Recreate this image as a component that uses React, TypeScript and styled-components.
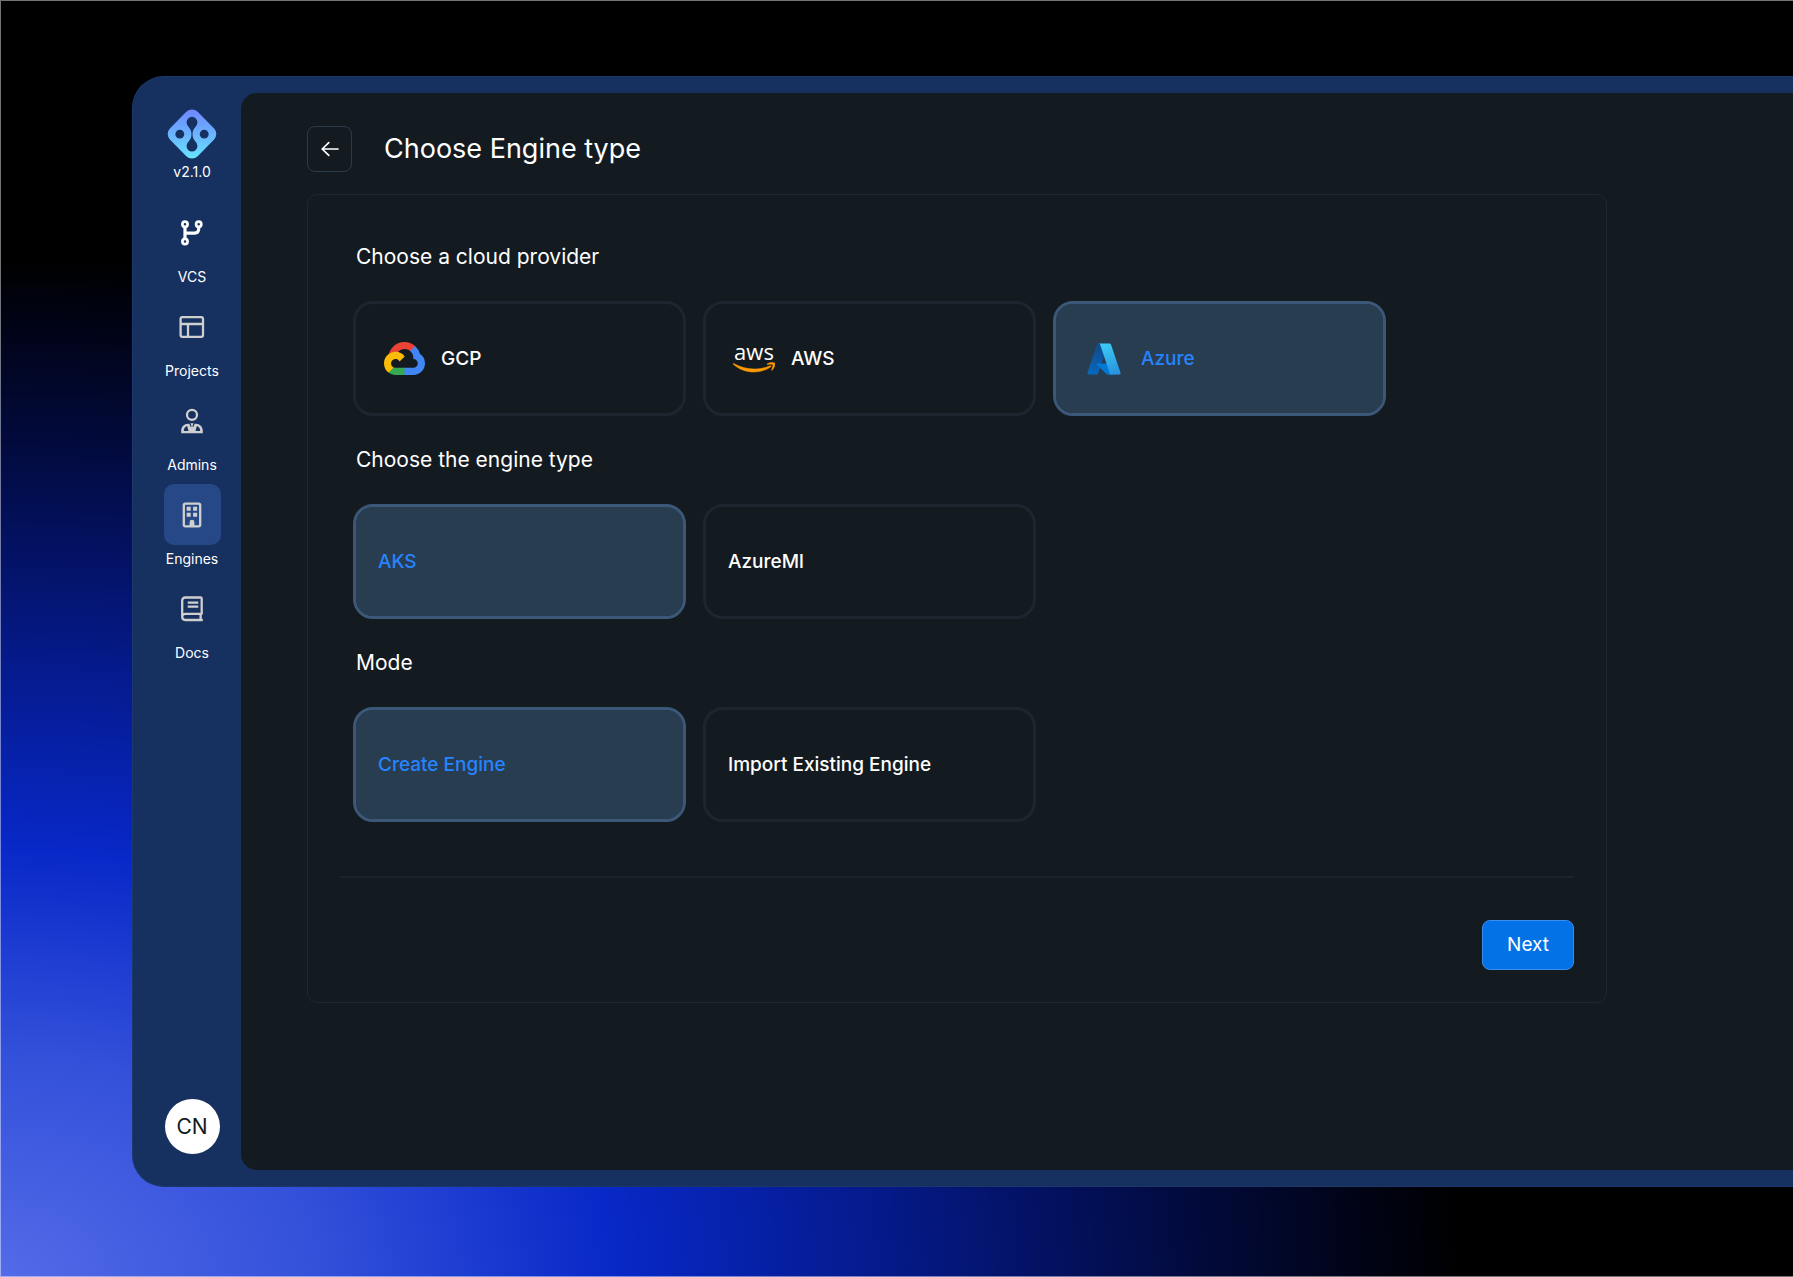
import React, { useState } from 'react';
import styled, { createGlobalStyle } from 'styled-components';

const GlobalStyle = createGlobalStyle`
  *, *::before, *::after { box-sizing: border-box; }
  body { margin: 0; background: #000; }
  body, button, input { font-family: Inter, "Liberation Sans", sans-serif; }
`;

const Page = styled.div`
  min-height: 100vh;
  display: flex;
  padding: 75px 0 89px 131px;
  border: 1px solid rgba(255, 255, 255, 0.45);
  border-right: 0;
  background: radial-gradient(
    ellipse 1460px 1020px at 0% 100%,
    #536bE8 0%,
    #3350da 22%,
    #0828c8 42%,
    #051a8c 60%,
    #020a3c 82%,
    #000 100%
  );
  background-origin: border-box;
`;

const AppWindow = styled.div`
  flex: 1;
  min-width: 0;
  display: flex;
  padding: 16px 0;
  border: 1px solid #1c3769;
  border-right: 0;
  border-radius: 32px 0 0 32px;
  background: #16305f;
`;

const Sidebar = styled.aside`
  flex: none;
  width: 108px;
  display: flex;
  flex-direction: column;
  align-items: center;
  padding: 16px 0 16px 10px;
  color: #fff;
`;

const Version = styled.span`
  margin-top: 4px;
  font-size: 14px;
  line-height: 18px;
`;

const Nav = styled.nav`
  display: flex;
  flex-direction: column;
  gap: 11px;
  margin-top: 21px;
`;

const NavLink = styled.a`
  display: flex;
  flex-direction: column;
  align-items: center;
  gap: 6px;
  color: #fff;
  font-size: 14px;
  line-height: 16px;
  text-decoration: none;
`;

const NavIcon = styled.span<{ $active?: boolean; $bright?: boolean }>`
  width: 57px;
  height: 61px;
  display: grid;
  place-items: center;
  border-radius: 10px;
  color: ${(p) => (p.$bright ? '#fff' : '#cfcfcf')};
  background: ${(p) => (p.$active ? '#274887' : 'transparent')};
`;

const Avatar = styled.button`
  width: 55px;
  height: 55px;
  margin-top: auto;
  padding: 0;
  border: 0;
  border-radius: 50%;
  background: #fff;
  color: #131a20;
  font-size: 21px;
  cursor: pointer;
`;

const Main = styled.main`
  flex: 1;
  min-width: 0;
  padding: 33px 66px;
  border-radius: 16px 0 0 16px;
  background: #141b20;
  color: #fff;
`;

const Header = styled.header`
  display: flex;
  align-items: center;
  gap: 32px;
  margin-bottom: 22px;
`;

const BackButton = styled.button`
  width: 45px;
  height: 46px;
  display: grid;
  place-items: center;
  padding: 0;
  border: 1px solid #2b3b4c;
  border-radius: 8px;
  background: transparent;
  color: #fff;
  cursor: pointer;
`;

const Title = styled.h1`
  margin: 0;
  font-size: 27px;
  font-weight: 400;
  line-height: 34px;
`;

const Card = styled.form`
  max-width: 1300px;
  padding: 50px 32px 32px;
  border: 1px solid #1e2730;
  border-radius: 10px;
`;

const Group = styled.fieldset`
  min-width: 0;
  margin: 0 13px 32px;
  padding: 0;
  border: 0;
`;

const GroupTitle = styled.legend`
  margin-bottom: 32px;
  padding: 0 3px;
  font-size: 21px;
  font-weight: 400;
  line-height: 24px;
`;

const Options = styled.div`
  display: flex;
  flex-wrap: wrap;
  gap: 17px;
`;

const Option = styled.label<{ $selected: boolean; $logo: boolean }>`
  position: relative;
  width: 333px;
  height: 115px;
  display: flex;
  align-items: center;
  gap: 16px;
  padding: 0 ${(p) => (p.$logo ? 27 : 22)}px;
  border: 3px solid ${(p) => (p.$selected ? '#3b5879' : '#1d252e')};
  border-radius: 20px;
  background: ${(p) => (p.$selected ? '#293d51' : 'transparent')};
  background-clip: padding-box;
  color: ${(p) => (p.$selected ? '#2684ff' : '#fff')};
  font-size: 19px;
  font-weight: 500;
  line-height: 24px;
  cursor: pointer;
`;

const Radio = styled.input`
  position: absolute;
  inset: 0;
  margin: 0;
  opacity: 0;
  cursor: pointer;
`;

const LogoSlot = styled.span`
  width: 42px;
  display: grid;
  place-items: center;
`;

const Footer = styled.footer`
  display: flex;
  justify-content: flex-end;
  margin-top: 54px;
  padding-top: 42px;
  border-top: 2px solid #1b232b;
`;

const NextButton = styled.button`
  height: 50px;
  padding: 0 24px;
  border: 1px solid #3a8fee;
  border-radius: 8px;
  background: #0472e7;
  color: #fff;
  font-size: 19px;
  line-height: 24px;
  cursor: pointer;
`;

const BrandMark = () => (
  <svg width="50" height="50" viewBox="0 0 50 50" aria-hidden="true">
    <defs>
      <linearGradient id="brand" x1="0" y1="0" x2="0" y2="50" gradientUnits="userSpaceOnUse">
        <stop offset="0" stopColor="#6f86ff" />
        <stop offset="0.5" stopColor="#6bb2ff" />
        <stop offset="1" stopColor="#66e6ff" />
      </linearGradient>
      <mask id="brandHoles">
        <rect width="50" height="50" fill="#fff" />
        <circle cx="12.8" cy="25.2" r="4.4" />
        <circle cx="37.2" cy="25.2" r="4.4" />
        <path d="M25 7.8a5.4 5.4 0 0 1 5.4 5.4c0 2.2-1 3.6-2.4 5.2-1.6 1.9-2.5 4-2.5 6.8s.9 4.900 2.500 6.800c1.400 1.600 2.400 3 2.400 5.200a5.400 5.400 0 0 1-10.800 0c0-2.200 1-3.600 2.400-5.200 1.600-1.900 2.500-4 2.500-6.800s-.9-4.900-2.500-6.800c-1.400-1.600-2.400-3-2.400-5.200A5.400 5.400 0 0 1 25 7.800z" />
      </mask>
    </defs>
    <g mask="url(#brandHoles)">
      <path
        d="M19.300 2.800a8 8 0 0 1 11.400 0L46.900 19.200a8.200 8.200 0 0 1 0 11.600L30.700 47.200a8 8 0 0 1-11.400 0L3.100 30.800a8.200 8.200 0 0 1 0-11.600z"
        fill="url(#brand)"
      />
    </g>
  </svg>
);

const IconBase = ({ children, strokeWidth = 2.3 }: { children: React.ReactNode; strokeWidth?: number }) => (
  <svg
    width="30"
    height="30"
    viewBox="0 0 30 30"
    fill="none"
    stroke="currentColor"
    strokeWidth={strokeWidth}
    strokeLinejoin="round"
    aria-hidden="true"
  >
    {children}
  </svg>
);

const BranchIcon = () => (
  <IconBase strokeWidth={2.7}>
    <circle cx="8" cy="6.2" r="2.6" />
    <circle cx="21.700" cy="6.200" r="2.600" />
    <circle cx="8" cy="23.500" r="2.600" />
    <path d="M8 9v12M21.700 9v1.800c0 2.600-1.700 4.300-4.200 4.300H8" strokeWidth="3.200" />
  </IconBase>
);

const LayoutIcon = () => (
  <IconBase>
    <rect x="3.600" y="5.100" width="22.400" height="19.800" rx="1.800" />
    <path d="M3.600 12h22.400M11 12v12.900" />
  </IconBase>
);

const AdminIcon = () => (
  <IconBase>
    <circle cx="15" cy="8.800" r="5" />
    <path
      d="M4.200 27.200v-2.400c0-4 3-7 6.900-7h1.200l1.700 3.800.5-1.700-1-2.700h3l-1 2.700.5 1.700 1.700-3.800h1.200c3.900 0 6.900 3 6.900 7v2.400zM6.800 25h4.700l-1.300-5c-2.200.5-3.400 2.500-3.400 5zm16.400 0c0-2.500-1.200-4.500-3.400-5l-1.300 5z"
      fill="currentColor"
      fillRule="evenodd"
      stroke="none"
    />
  </IconBase>
);

const BuildingIcon = () => (
  <IconBase>
    <rect x="6.800" y="3.600" width="16.400" height="22.800" rx="1.600" />
    <path
      d="M9.700 6.800h4v4h-4zM16.100 6.800h4v4h-4zM9.700 12.800h4v4h-4zM16.100 12.800h4v4h-4zM12.600 27v-4.800a2.400 2.400 0 0 1 4.800 0V27z"
      fill="currentColor"
      stroke="none"
    />
  </IconBase>
);

const BookIcon = () => (
  <IconBase>
    <path d="M5.200 23.300V6.500a3 3 0 0 1 3-3h15.300a1.200 1.200 0 0 1 1.200 1.200v15.100H8.200a3 3 0 0 0-3 3c0 1.900 1.300 3.200 3 3.200h17.600M23.600 20v5.500" />
    <path d="M10.700 8.700h10.600M10.700 12.700h10.600" />
  </IconBase>
);

const ArrowLeftIcon = () => (
  <svg width="20" height="20" viewBox="0 0 20 20" fill="none" stroke="currentColor" strokeWidth="1.7" strokeLinecap="round" strokeLinejoin="round" aria-hidden="true">
    <path d="M18 10H2.200M8.800 3.600L2.200 10l6.600 6.400" />
  </svg>
);

const GcpLogo = () => (
  <svg width="41" height="33" viewBox="0 0 256 206" aria-hidden="true">
    <path fill="#EA4335" d="M170.252 56.819l22.253-22.253 1.483-9.370C153.437-11.677 88.976-7.496 52.421 33.920 42.267 45.423 34.734 59.764 30.717 74.573l7.970-1.123 44.505-7.339 3.436-3.514c19.797-21.742 53.270-24.667 76.128-6.168l7.496.39z" />
    <path fill="#4285F4" d="M224.205 73.918a100.249 100.249 0 0 0-30.217-48.722l-31.232 31.232a55.515 55.515 0 0 1 20.379 44.037v5.544c15.351 0 27.797 12.445 27.797 27.796 0 15.352-12.446 27.485-27.797 27.485h-55.671l-5.466 5.934v33.340l5.466 5.231h55.671c39.930.311 72.552-31.494 72.863-71.424a72.248 72.248 0 0 0-31.793-60.453" />
    <path fill="#34A853" d="M71.870 205.796h55.593V161.290H71.870a27.275 27.275 0 0 1-11.399-2.498l-7.887 2.420-22.409 22.253-1.952 7.574c12.567 9.489 27.900 14.825 43.647 14.757" />
    <path fill="#FBBC05" d="M71.870 61.426C31.939 61.664-.237 94.228.001 134.158a72.301 72.301 0 0 0 28.222 56.881l32.248-32.247c-13.991-6.321-20.208-22.786-13.887-36.776 6.320-13.990 22.786-20.207 36.775-13.887a27.796 27.796 0 0 1 13.887 13.887l32.248-32.247A72.224 72.224 0 0 0 71.870 61.426" />
  </svg>
);

const AwsLogo = () => (
  <svg width="42" height="47" viewBox="0 -10 42 47" aria-hidden="true">
    <text x="21" y="15" textAnchor="middle" fontFamily="'Open Sans', 'Noto Sans', sans-serif" fontSize="22" fontWeight="500" fill="#fff">
      aws
    </text>
    <g transform="translate(0 2) scale(0.164)" fill="#FF9900" stroke="#FF9900" strokeWidth="3">
      <path d="M230.993 120.964c-27.888 20.599-68.408 31.534-103.247 31.534-48.827 0-92.821-18.056-126.050-48.064-2.628-2.373-.255-5.594 2.868-3.738 35.890 20.832 80.160 33.465 125.945 33.465 30.880 0 64.810-6.413 96.050-19.633 4.700-2.129 8.656 3.109 4.434 6.436z" />
      <path d="M242.607 107.681c-3.589-4.573-23.794-2.160-32.865-1.081-2.758.339-3.179-2.058-.695-3.791 16.098-11.291 42.515-8.035 45.593-4.239 3.085 3.812-.808 30.185-15.930 42.830-2.320 1.942-4.532.908-3.505-1.654 3.404-8.487 11.021-27.491 7.402-32.065z" />
    </g>
  </svg>
);

const AzureLogo = () => (
  <svg width="36" height="36" viewBox="0 0 96 96" aria-hidden="true">
    <defs>
      <linearGradient id="azLeft" x1="46" y1="13" x2="19" y2="93" gradientUnits="userSpaceOnUse">
        <stop offset="0" stopColor="#114a8b" />
        <stop offset="1" stopColor="#0669bc" />
      </linearGradient>
      <linearGradient id="azRight" x1="46" y1="10" x2="76" y2="89" gradientUnits="userSpaceOnUse">
        <stop offset="0" stopColor="#3ccbf4" />
        <stop offset="1" stopColor="#2892df" />
      </linearGradient>
    </defs>
    <path fill="url(#azLeft)" d="M33.338 6.544h26.038l-27.030 80.087a4.152 4.152 0 0 1-3.933 2.824H8.149a4.145 4.145 0 0 1-3.928-5.470L29.404 9.368a4.152 4.152 0 0 1 3.934-2.825z" />
    <path fill="#0078d4" d="M71.175 60.261h-41.290a1.911 1.911 0 0 0-1.305 3.309l26.532 24.764a4.171 4.171 0 0 0 2.846 1.121h23.380z" />
    <path fill="url(#azRight)" d="M66.595 9.364a4.145 4.145 0 0 0-3.928-2.820H33.648a4.146 4.146 0 0 1 3.928 2.820l25.184 74.620a4.146 4.146 0 0 1-3.928 5.472h29.020a4.146 4.146 0 0 0 3.927-5.472z" />
  </svg>
);

const navItems = [
  { label: 'VCS', icon: <BranchIcon />, bright: true },
  { label: 'Projects', icon: <LayoutIcon /> },
  { label: 'Admins', icon: <AdminIcon /> },
  { label: 'Engines', icon: <BuildingIcon />, active: true },
  { label: 'Docs', icon: <BookIcon /> },
];

type Choice = { label: string; logo?: React.ReactNode };

const groups: { name: string; title: string; choices: Choice[] }[] = [
  {
    name: 'provider',
    title: 'Choose a cloud provider',
    choices: [
      { label: 'GCP', logo: <GcpLogo /> },
      { label: 'AWS', logo: <AwsLogo /> },
      { label: 'Azure', logo: <AzureLogo /> },
    ],
  },
  { name: 'engine', title: 'Choose the engine type', choices: [{ label: 'AKS' }, { label: 'AzureMl' }] },
  { name: 'mode', title: 'Mode', choices: [{ label: 'Create Engine' }, { label: 'Import Existing Engine' }] },
];

export default function App() {
  const [selected, setSelected] = useState<Record<string, string>>({
    provider: 'Azure',
    engine: 'AKS',
    mode: 'Create Engine',
  });

  return (
    <>
      <GlobalStyle />
      <Page>
        <AppWindow>
          <Sidebar>
            <BrandMark />
            <Version>v2.1.0</Version>
            <Nav>
              {navItems.map((item) => (
                <NavLink key={item.label} href="#" aria-current={item.active ? 'page' : undefined}>
                  <NavIcon $active={item.active} $bright={item.bright}>
                    {item.icon}
                  </NavIcon>
                  {item.label}
                </NavLink>
              ))}
            </Nav>
            <Avatar type="button">CN</Avatar>
          </Sidebar>
          <Main>
            <Header>
              <BackButton type="button" aria-label="Back">
                <ArrowLeftIcon />
              </BackButton>
              <Title>Choose Engine type</Title>
            </Header>
            <Card onSubmit={(e) => e.preventDefault()}>
              {groups.map((group) => (
                <Group key={group.name}>
                  <GroupTitle>{group.title}</GroupTitle>
                  <Options>
                    {group.choices.map(({ label, logo }) => (
                      <Option key={label} $selected={selected[group.name] === label} $logo={Boolean(logo)}>
                        <Radio
                          type="radio"
                          name={group.name}
                          value={label}
                          checked={selected[group.name] === label}
                          onChange={() => setSelected({ ...selected, [group.name]: label })}
                        />
                        {logo && <LogoSlot>{logo}</LogoSlot>}
                        {label}
                      </Option>
                    ))}
                  </Options>
                </Group>
              ))}
              <Footer>
                <NextButton type="submit">Next</NextButton>
              </Footer>
            </Card>
          </Main>
        </AppWindow>
      </Page>
    </>
  );
}
